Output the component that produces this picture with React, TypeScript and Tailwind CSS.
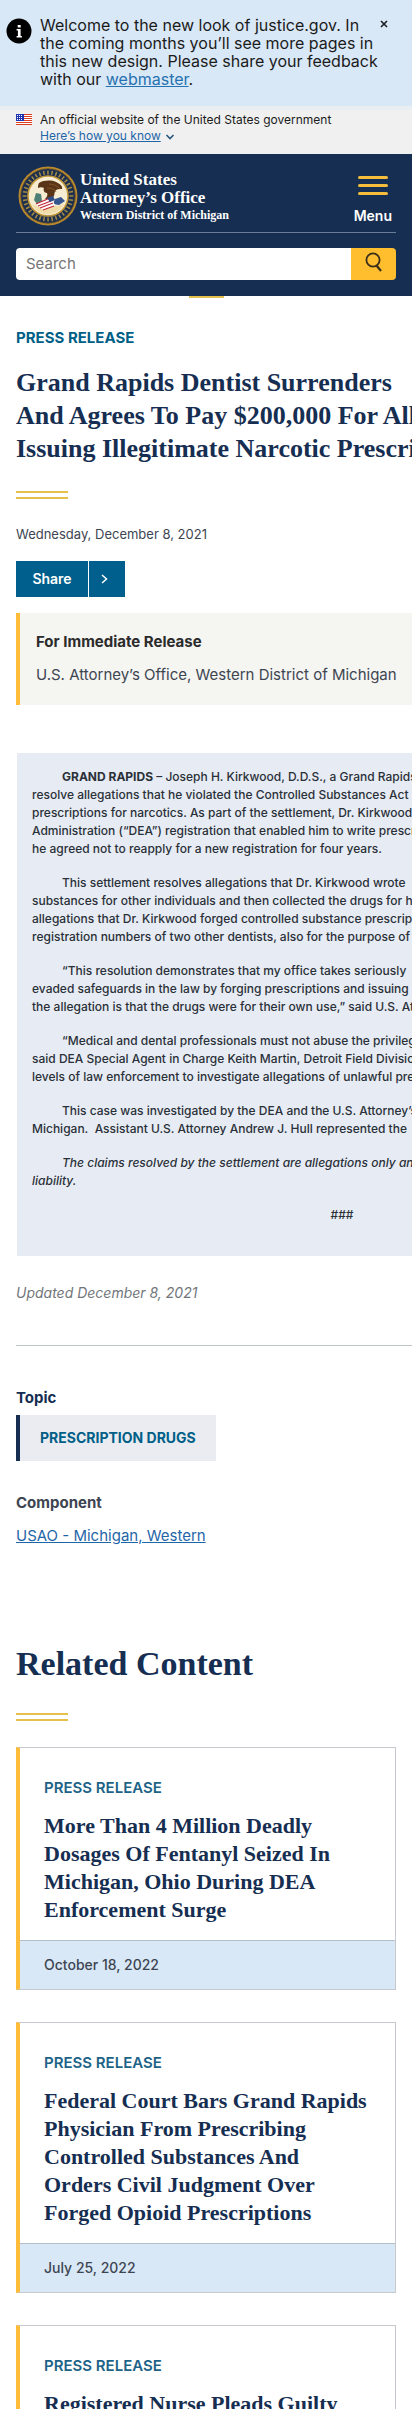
import type { ReactNode } from "react";

const ringTicks = Array.from({ length: 36 }, (_, i) => i * 10);

function Seal() {
  return (
    <svg viewBox="0 0 60 60" className="size-[60px] shrink-0" role="img" aria-label="Department of Justice seal">
      <circle cx="30" cy="30" r="29.5" fill="#b9892f" />
      <circle cx="30" cy="30" r="27.3" fill="#1d2f4f" stroke="#6d5526" strokeWidth="0.8" />
      {ringTicks.map((a) => (
        <rect key={a} x="29.2" y="4.6" width="1.5" height="4" fill="#a58a45" transform={`rotate(${a} 30 30)`} />
      ))}
      <circle cx="30" cy="30" r="20" fill="#f6ecd2" stroke="#c79a3c" strokeWidth="1.6" />
      <path d="M14 38c4 7 9 10 16 10s13-4 16-10l-6 2-20 1z" fill="#efdca8" />
      <path d="M18 27l5 1 1 7-5 3-3-4z" fill="#4d7f74" />
      <path d="M37 33l6-2 4 4-6 4-6-1z" fill="#34558d" />
      <path d="M21 17c5-3 12-3 17-1 4 2 7 4 6 7-3 0-5 0-7 2l-1 5c-2 3-6 4-9 3 2-2 3-4 2-6-3 0-4-3-3-5-2-1-4-1-6 0 0-2 0-3 1-5z" fill="#5a3416" />
      <path d="M31 18c4 0 9 2 11 5M29 22c4 0 8 1 9 4" stroke="#8a5a2b" strokeWidth="0.8" fill="none" />
      <path d="M18 38l15-7 4 8-12 5z" fill="#fff" />
      <path d="M18 38l14-6M20 40l13-5M22 42l13-5M25 44l11-4" stroke="#c2293a" strokeWidth="1.2" />
      <path d="M29 32l6-2 2 4-5 2z" fill="#2f4d86" />
      <path d="M22 50h16" stroke="#8b7a4a" strokeWidth="1" strokeDasharray="1.5 1" />
    </svg>
  );
}

function Flag() {
  return (
    <svg viewBox="0 0 16 11" className="mt-0.5 h-[11px] w-4 shrink-0" shapeRendering="crispEdges" aria-hidden="true">
      <rect width="16" height="11" fill="#fff" />
      {[0, 2, 4, 6, 8, 10].map((y) => (
        <rect key={y} y={y} width="16" height="1" fill="#db3e1f" />
      ))}
      <rect width="8" height="7" fill="#1e33b1" />
      {[1, 3, 5].map((y) => (
        <g key={y} fill="#fff">
          <rect x="1" y={y} width="1" height="1" />
          <rect x="3" y={y} width="1" height="1" />
          <rect x="5" y={y} width="1" height="1" />
        </g>
      ))}
    </svg>
  );
}

function DoubleRule() {
  return <div aria-hidden="true" className="h-2 w-[52px] border-y-2 border-[#e5c04c]" />;
}

function Paragraph({ children }: { children: ReactNode }) {
  return <p className="indent-[30px]">{children}</p>;
}

function Card({ title, date }: { title: ReactNode; date?: string }) {
  return (
    <article className="border border-l-4 border-[#c6cace] border-l-[#ffbc38]">
      <div className="px-6 pt-[30px] pb-4">
        <p className="text-[15px] leading-5 font-semibold text-[#1d6388]">PRESS RELEASE</p>
        <h3 className="mt-3.5 font-['Liberation_Serif',serif] text-[22px] leading-7 font-bold text-[#162e51]">
          <a href="#">{title}</a>
        </h3>
      </div>
      {date && (
        <p className="border-t border-[#b5bfca] bg-[#d9e8f6] px-6 py-3.5 text-sm font-medium text-[#3d4551]">{date}</p>
      )}
    </article>
  );
}

export default function App() {
  return (
    <div className="h-screen overflow-hidden bg-white font-['Inter',sans-serif] text-[#3d4551]">
      <section className="flex items-start bg-[#d9e8f6] pt-4 pr-6 pb-[18px] pl-1.5 text-base leading-[18px] text-[#1b1b1b]">
        <svg viewBox="0 0 26 26" className="mt-0.5 mr-2 size-[26px] shrink-0" aria-hidden="true">
          <circle cx="13" cy="13" r="12.5" fill="#000" />
          <path d="M11.7 7h3v2.6h-3zM10.6 11h4v7h1.3v1.6h-5.3V18h1.3v-5.4h-1.3z" fill="#fff" />
        </svg>
        <p className="flex-1 whitespace-nowrap">
          Welcome to the new look of justice.gov. In
          <br />
          the coming months you’ll see more pages in
          <br />
          this new design. Please share your feedback
          <br />
          with our <a href="#" className="text-[#2672b0] underline">webmaster</a>.
        </p>
        <button type="button" aria-label="Close" className="mt-1 ml-auto shrink-0">
          <svg viewBox="0 0 8 8" className="size-2" aria-hidden="true">
            <path d="M1 1l6 6M7 1L1 7" stroke="#1b1b1b" strokeWidth="1.6" />
          </svg>
        </button>
      </section>

      <section className="flex items-start gap-2 border-t-4 border-[#e9eef3] bg-[#f0f0f0] px-4 pt-0.5 pb-2 text-xs leading-4 text-[#1b1b1b]">
        <Flag />
        <div>
          <p>An official website of the United States government</p>
          <button type="button" className="flex items-center gap-1 pb-0.5 text-[#1f66a8]">
            <span className="underline">Here’s how you know</span>
            <svg viewBox="0 0 10 6" className="mt-0.5 h-1.5 w-2.5" aria-hidden="true">
              <path d="M1.5 1L5 4.5 8.500 1" stroke="#28577f" strokeWidth="1.6" fill="none" />
            </svg>
          </button>
        </div>
      </section>

      <header className="bg-[#162e51] px-4 pt-3 pb-4 text-white">
        <div className="flex items-start justify-between border-b border-[#6b7c96] pb-1.5">
          <a href="#" className="flex items-center gap-0.5 pl-0.5 font-['Liberation_Serif',serif] font-bold">
            <Seal />
            <span className="pt-0.5">
              <span className="block text-[17px] leading-[18px]">United States</span>
              <span className="block text-[17px] leading-[18px]">Attorney’s Office</span>
              <span className="block text-xs">Western District of Michigan</span>
            </span>
          </a>
          <button type="button" className="mt-2.5 mr-1 flex flex-col items-center gap-[11px]">
            <span className="flex w-[30px] flex-col gap-[5px]">
              <span className="h-[3px] rounded-full bg-[#f6bd3c]" />
              <span className="h-[3px] rounded-full bg-[#f6bd3c]" />
              <span className="h-[3px] rounded-full bg-[#f6bd3c]" />
            </span>
            <span className="text-sm font-semibold">Menu</span>
          </button>
        </div>
        <form role="search" className="mt-[15px] flex h-8 overflow-hidden rounded" onSubmit={(e) => e.preventDefault()}>
          <input
            type="search"
            aria-label="Search"
            placeholder="Search"
            className="min-w-0 flex-1 bg-white px-2.5 text-[15px] text-[#1b1b1b] placeholder:text-[#757575]"
          />
          <button type="submit" aria-label="Submit search" className="flex w-[45px] items-center justify-center bg-[#ffbe2e]">
            <svg viewBox="0 0 20 20" className="-mt-1 size-5" fill="none" stroke="#3a2f1c" strokeWidth="1.8" aria-hidden="true">
              <circle cx="9" cy="8" r="6.600" />
              <path d="M12.500 13.500l4.500 5.500" strokeWidth="2.200" />
            </svg>
          </button>
        </form>
      </header>

      <main>
        <div className="ml-[189px] h-0.5 w-[35px] bg-[#e5c04c]" aria-hidden="true" />

        <div className="overflow-hidden pl-4">
          <div className="min-w-[651px]">
            <p className="pt-[30px] text-[15px] leading-5 font-bold text-[#005f87]">PRESS RELEASE</p>
            <h1 className="mt-[18px] font-['Liberation_Serif',serif] text-[26px] leading-[33px] font-bold whitespace-nowrap text-[#162e51]">
              Grand Rapids Dentist Surrenders
              <br />
              And Agrees To Pay $200,000 For Allegedly
              <br />
              Issuing Illegitimate Narcotic Prescriptions
            </h1>
            <div className="pt-[26px]">
              <DoubleRule />
            </div>
            <p className="mt-[25px] text-[13px] leading-5">Wednesday, December 8, 2021</p>
            <button type="button" className="mt-[17px] flex h-9 items-stretch bg-[#005f8c] text-sm font-semibold text-white">
              <span className="flex w-[72px] items-center justify-center">Share</span>
              <span className="flex w-[37px] items-center border-l border-white pl-3">
                <svg viewBox="0 0 7 10" className="h-2.5 w-[7px]" aria-hidden="true">
                  <path d="M1 1l4.500 4L1 9" stroke="#fff" strokeWidth="1.500" fill="none" />
                </svg>
              </span>
            </button>
            <section className="mt-4 border-l-4 border-[#ffbc38] bg-[#f5f5f2] px-4 pt-[17px] pb-[18px]">
              <h2 className="text-[15px] leading-6 font-bold text-[#2b2b2b]">For Immediate Release</h2>
              <p className="mt-[9px] text-[15px] leading-6">U.S. Attorney’s Office, Western District of Michigan</p>
            </section>

            <section className="mt-12 ml-px flex flex-col gap-4 bg-[#e7ecf4] px-[15px] pt-[15px] pb-8 text-xs leading-[18px] font-medium whitespace-nowrap text-[#2a3038]">
              <Paragraph>
                <strong>GRAND RAPIDS</strong> – Joseph H. Kirkwood, D.D.S., a Grand Rapids
                <br />
                resolve allegations that he violated the Controlled Substances Act
                <br />
                prescriptions for narcotics. As part of the settlement, Dr. Kirkwood
                <br />
                Administration (“DEA”) registration that enabled him to write prescriptions
                <br />
                he agreed not to reapply for a new registration for four years.
              </Paragraph>
              <Paragraph>
                This settlement resolves allegations that Dr. Kirkwood wrote
                <br />
                substances for other individuals and then collected the drugs for his
                <br />
                allegations that Dr. Kirkwood forged controlled substance prescriptions
                <br />
                registration numbers of two other dentists, also for the purpose of
              </Paragraph>
              <Paragraph>
                “This resolution demonstrates that my office takes seriously
                <br />
                evaded safeguards in the law by forging prescriptions and issuing illegitimate
                <br />
                the allegation is that the drugs were for their own use,” said U.S. Attorney
              </Paragraph>
              <Paragraph>
                “Medical and dental professionals must not abuse the privilege
                <br />
                said DEA Special Agent in Charge Keith Martin, Detroit Field Division
                <br />
                levels of law enforcement to investigate allegations of unlawful prescribing
              </Paragraph>
              <Paragraph>
                This case was investigated by the DEA and the U.S. Attorney’s
                <br />
                Michigan.&nbsp; Assistant U.S. Attorney Andrew J. Hull represented the
              </Paragraph>
              <Paragraph>
                <em>
                  The claims resolved by the settlement are allegations only and
                  <br />
                  liability.
                </em>
              </Paragraph>
              <p className="text-center">###</p>
            </section>

            <p className="mt-[27px] text-sm text-[#71767a] italic">Updated December 8, 2021</p>
            <hr className="mt-[42px] border-[#c0c6c6]" />
          </div>
        </div>

        <section className="px-4 pt-10 leading-6">
          <h2 className="text-[15px] leading-6 font-bold text-[#162e51]">Topic</h2>
          <a href="#" className="mt-[5px] flex h-[46px] w-fit items-center border-l-4 border-[#162e51] bg-[#eaecf1] px-5 text-sm font-bold text-[#005f87]">
            PRESCRIPTION DRUGS
          </a>
          <h2 className="mt-[30px] text-[15px] leading-6 font-bold">Component</h2>
          <a href="#" className="mt-[9px] block w-fit text-[15px] leading-6 text-[#1f66a8] underline">USAO - Michigan, Western</a>
        </section>

        <section className="px-4 pt-[92px]">
          <h2 className="font-['Liberation_Serif',serif] text-[34px] leading-[48px] font-bold text-[#162e51]">Related Content</h2>
          <div className="pt-[25px] pb-[26px]">
            <DoubleRule />
          </div>
          <div className="flex flex-col gap-8">
            <Card
              date="October 18, 2022"
              title={
                <>
                  More Than 4 Million Deadly
                  <br />
                  Dosages Of Fentanyl Seized In
                  <br />
                  Michigan, Ohio During DEA
                  <br />
                  Enforcement Surge
                </>
              }
            />
            <Card
              date="July 25, 2022"
              title={
                <>
                  Federal Court Bars Grand Rapids
                  <br />
                  Physician From Prescribing
                  <br />
                  Controlled Substances And
                  <br />
                  Orders Civil Judgment Over
                  <br />
                  Forged Opioid Prescriptions
                </>
              }
            />
            <Card title="Registered Nurse Pleads Guilty" />
          </div>
        </section>
      </main>
    </div>
  );
}
